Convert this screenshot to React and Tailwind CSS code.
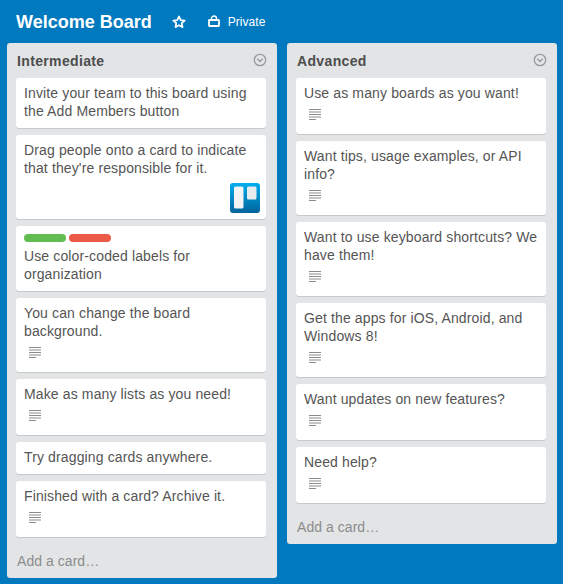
const intermediate = [
  { text: "Invite your team to this board using the Add Members button" },
  { text: "Drag people onto a card to indicate that they're responsible for it.", avatar: true },
  { text: "Use color-coded labels for organization", labels: true },
  { text: "You can change the board background.", desc: true },
  { text: "Make as many lists as you need!", desc: true },
  { text: "Try dragging cards anywhere." },
  { text: "Finished with a card? Archive it.", desc: true },
];

const advanced = [
  { text: "Use as many boards as you want!", desc: true },
  { text: "Want tips, usage examples, or API info?", desc: true },
  { text: "Want to use keyboard shortcuts? We have them!", desc: true },
  { text: "Get the apps for iOS, Android, and Windows 8!", desc: true },
  { text: "Want updates on new features?", desc: true },
  { text: "Need help?", desc: true },
];

function DescIcon() {
  return (
    <svg width="12" height="11" viewBox="0 0 12 11" className="block">
      <g fill="#8c8c8c">
        <rect x="0" y="0" width="12" height="1" />
        <rect x="0" y="2.5" width="12" height="1" />
        <rect x="0" y="5" width="12" height="1" />
        <rect x="0" y="7.5" width="12" height="1" />
        <rect x="0" y="10" width="7" height="1" />
      </g>
    </svg>
  );
}

function TrelloLogo() {
  return (
    <svg width="30" height="30" viewBox="0 0 30 30" className="block">
      <defs>
        <linearGradient id="logoBg" x1="0" y1="0" x2="0" y2="1">
          <stop offset="0" stopColor="#00aeef" />
          <stop offset="1" stopColor="#00639c" />
        </linearGradient>
      </defs>
      <rect width="30" height="30" rx="3" fill="url(#logoBg)" />
      <rect x="4" y="3.5" width="9.5" height="22" rx="1.5" fill="#f2f4f6" />
      <rect x="17" y="3.5" width="9.5" height="13" rx="1.5" fill="#e8ebee" />
    </svg>
  );
}

function Card({ card }) {
  return (
    <div className="rounded-[3px] bg-white px-2 pt-1.5 pb-2 shadow-[0_1px_0_#c4c9cc]">
      {card.labels && (
        <div className="mt-0.5 mb-[5px] flex gap-[3px]">
          <span className="h-2 w-[42px] rounded-[4px] bg-[#61bd4f]" />
          <span className="h-2 w-[42px] rounded-[4px] bg-[#eb5a46]" />
        </div>
      )}
      <div className="text-sm leading-[18px] tracking-[0.13px] text-[#555]">{card.text}</div>
      {card.desc && (
        <div className="flex h-6 items-center pt-px pl-[5px]">
          <DescIcon />
        </div>
      )}
      {card.avatar && (
        <div className="mt-1.5 -mr-0.5 -mb-0.5 flex justify-end">
          <TrelloLogo />
        </div>
      )}
    </div>
  );
}

function List({ title, cards }) {
  return (
    <div className="w-[270px] rounded-[3px] bg-[#e2e4e6] pr-[11px] pl-[9px]">
      <div className="flex h-[35px] items-center justify-between pl-px">
        <h2 className="text-sm leading-[18px] font-bold tracking-[0.35px] text-[#4d4d4d]">{title}</h2>
        <svg width="14" height="14" viewBox="0 0 14 14" fill="none" stroke="#999" className="-mr-px mb-px block">
          <circle cx="7" cy="7" r="5.7" strokeWidth="1.3" />
          <path d="M4.3 5.8 7 8.5l2.7-2.7" strokeWidth="1.4" />
        </svg>
      </div>
      <div className="flex flex-col gap-[7px]">
        {cards.map((card) => (
          <Card key={card.text} card={card} />
        ))}
      </div>
      <div className="flex h-[41px] items-end pb-2 pl-px text-sm leading-[18px] tracking-[0.05px] text-[#8c8c8c]">Add a card…</div>
    </div>
  );
}

export default function App() {
  return (
    <div className="h-[584px] w-[563px] overflow-hidden bg-[#0079bf] font-['Liberation_Sans',Arial,sans-serif]">
      <div className="flex h-[43px] items-center pl-4 text-white">
        <h1 className="text-lg leading-6 font-bold">Welcome Board</h1>
        <svg width="14" height="14" viewBox="0 0 24 24" fill="none" stroke="#fff" strokeWidth="3" className="ml-[20px] block">
          <path d="M12 2.5l2.9 6.2 6.8.8-5 4.6 1.3 6.7-6-3.4-6 3.4 1.3-6.7-5-4.6 6.8-.8z" strokeLinejoin="round" />
        </svg>
        <svg width="12" height="12" viewBox="0 0 12 12" fill="none" stroke="#fff" className="mb-0.5 ml-[22px] block">
          <rect x="1" y="5" width="10" height="6" strokeWidth="1.8" rx="0.5" />
          <path d="M3.5 5V3.5a2.5 2.5 0 0 1 5 0V5" strokeWidth="1.4" />
        </svg>
        <span className="ml-2 text-xs leading-4 tracking-[0.05px]">Private</span>
      </div>
      <div className="flex items-start gap-[10px] pl-[7px]">
        <List title="Intermediate" cards={intermediate} />
        <List title="Advanced" cards={advanced} />
      </div>
    </div>
  );
}
